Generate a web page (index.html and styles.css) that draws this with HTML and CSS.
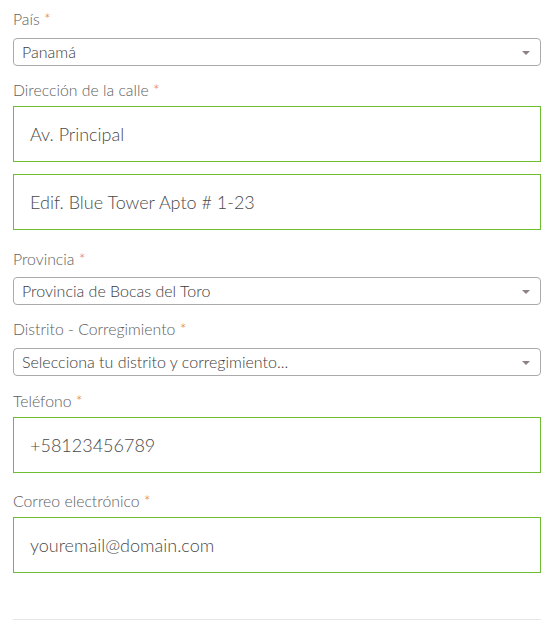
FILE: index.html
```html
<!DOCTYPE html>
<html lang="es">
<head>
<meta charset="utf-8">
<link rel="stylesheet" href="styles.css">
</head>
<body>
<form class="form">
  <label class="label label-first">País <span class="req">*</span></label>
  <div class="select"><span class="select-text">Panamá</span><span class="arrow"></span></div>

  <label class="label label-after-select">Dirección de la calle <span class="req">*</span></label>
  <div class="input">Av. Principal</div>
  <div class="input input-stack">Edif. Blue Tower Apto # 1-23</div>

  <label class="label label-after-input">Provincia <span class="req">*</span></label>
  <div class="select select-after-label"><span class="select-text">Provincia de Bocas del Toro</span><span class="arrow"></span></div>

  <label class="label label-after-select">Distrito - Corregimiento <span class="req">*</span></label>
  <div class="select"><span class="select-text">Selecciona tu distrito y corregimiento...</span><span class="arrow"></span></div>

  <label class="label label-after-select2">Teléfono <span class="req">*</span></label>
  <div class="input">+58123456789</div>

  <label class="label label-after-input2">Correo electrónico <span class="req">*</span></label>
  <div class="input">youremail@domain.com</div>

  <div class="divider"></div>
</form>
</body>
</html>
```
FILE: styles.css
```css
html, body {
  margin: 0;
  padding: 0;
  background: #ffffff;
}
body {
  font-family: Lato, "Open Sans", sans-serif;
  font-weight: 300;
}
.form {
  display: flex;
  flex-direction: column;
  width: 528px;
  padding: 9px 0 0 13px;
}
.label {
  display: block;
  font-size: 15.8px;
  line-height: 20px;
  height: 20px;
  color: #5e5e5e;
}
.req {
  color: #dc6f33;
}
.label-first { margin-top: 0; }
.label-after-select { margin-top: 14px; }
.label-after-select2 { margin-top: 15px; }
.label-after-input { margin-top: 19px; }
.label-after-input2 { margin-top: 18px; }

.select {
  box-sizing: border-box;
  height: 28px;
  margin-top: 9px;
  border: 1px solid #aaaaaa;
  border-radius: 4px;
  display: flex;
  align-items: center;
  justify-content: space-between;
  padding: 0 10px 0 8px;
}
.select-after-label { margin-top: 8px; }
.select-text {
  font-size: 16px;
  color: #3c3c3c;
  line-height: 26px;
}
.arrow {
  width: 0;
  height: 0;
  border-left: 4px solid transparent;
  border-right: 4px solid transparent;
  border-top: 4px solid #8f7f87;
  margin-top: 1px;
}
.input {
  box-sizing: border-box;
  height: 56px;
  margin-top: 6px;
  border: 1px solid #6cbd31;
  padding: 0 15px 0 16px;
  display: flex;
  align-items: center;
  font-size: 18px;
  color: #4a4a4a;
}
.input-stack { margin-top: 12px; }
.divider {
  margin-top: 46px;
  height: 2px;
  background: #e6e6e6;
}
```
